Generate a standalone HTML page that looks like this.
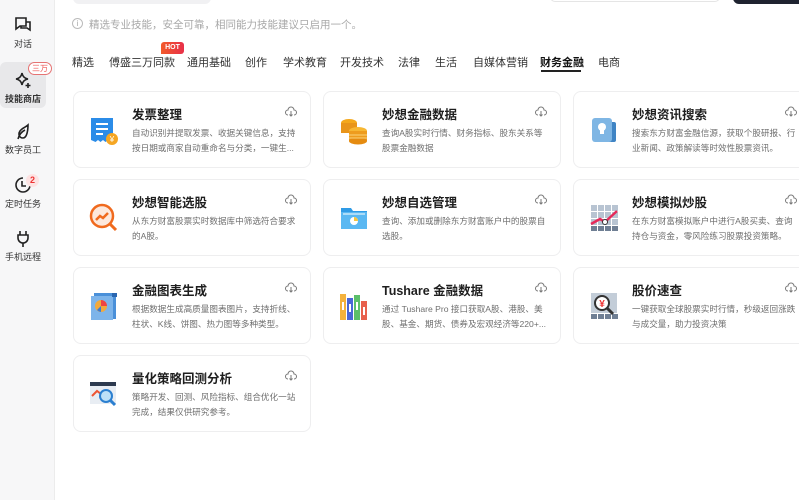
<!DOCTYPE html>
<html><head><meta charset="utf-8"><style>
*{margin:0;padding:0;box-sizing:border-box}
body{width:799px;height:500px;overflow:hidden;background:#fff;font-family:"Liberation Sans","Noto Sans CJK SC",sans-serif;position:relative;color:#222}
.sb{position:absolute;left:0;top:0;width:55px;height:500px;background:#f7f7f8;border-right:1px solid #ececec}
.si{position:absolute;left:0;width:46px;text-align:center;font-size:9px;color:#333}
.si svg{display:block;margin:0 auto 3px}
.act{background:#e8e8ea;border-radius:6px;font-weight:bold}
.a{position:absolute}
.tab{position:absolute;top:54px;font-size:11px;color:#333;white-space:nowrap}
.card{position:absolute;width:238px;height:77px;border:1px solid #eeeeef;border-radius:8px;background:#fff}
.card .ic{position:absolute;left:14px;top:22px;width:32px;height:32px}
.card h3{position:absolute;left:58px;top:12px;font-size:12.5px;font-weight:bold;color:#1e1e1e;white-space:nowrap}
.card p{position:absolute;left:58px;top:34px;width:168px;font-size:8.6px;line-height:15px;color:#6f6f6f;height:30px;overflow:hidden}
.card .dl{position:absolute;right:13px;top:14px}
</style></head><body>
<div class="a" style="left:73px;top:-8px;width:138px;height:12px;background:#f1f1f3;border-radius:6px"></div>
<div class="a" style="left:550px;top:-8px;width:170px;height:10px;border:1px solid #e5e5e5;border-radius:6px"></div>
<div class="a" style="left:733px;top:-8px;width:80px;height:12px;background:#1f2330;border-radius:6px"></div>

<div class="sb">
<div class="si" style="top:16px"><svg width="18" height="18" viewBox="0 0 18 18" fill="none" stroke="#222" stroke-width="1.6"><path d="M2 2h10v8H6l-4 3z"/><path d="M12 6h4v8l-3-2H7v-2"/></svg>对话</div>
<div class="si act" style="top:62px;height:46px;padding-top:9px"><svg width="18" height="18" viewBox="0 0 18 18" fill="none" stroke="#222" stroke-width="1.6"><path d="M8 2c.6 3.6 2.4 5.4 6 6-3.6.6-5.4 2.4-6 6-.6-3.6-2.4-5.4-6-6 3.6-.6 5.4-2.4 6-6z"/><path d="M14 12v5M11.5 14.5h5"/></svg>技能商店</div>
<div class="a" style="left:28px;top:62px;width:24px;height:13px;border:1px solid #e57373;border-radius:7px;background:#fff;color:#e55;font-size:8px;text-align:center;line-height:11px">三万</div>
<div class="si" style="top:122px"><svg width="18" height="18" viewBox="0 0 18 18" fill="none" stroke="#222" stroke-width="1.6"><path d="M9 16c-4 0-5-4-3-7s6-4 8-6c0 5-1 13-5 13zM4 17c1-4 3-7 7-9"/></svg>数字员工</div>
<div class="si" style="top:176px"><svg width="18" height="18" viewBox="0 0 18 18" fill="none" stroke="#222" stroke-width="1.6"><path d="M9 2a7 7 0 1 0 7 7"/><path d="M8 5v5h4"/></svg>定时任务</div>
<div class="a" style="left:26px;top:174px;width:13px;height:13px;border-radius:7px;background:#fde3e3;color:#e33;font-size:9px;font-weight:bold;text-align:center;line-height:13px">2</div>
<div class="si" style="top:229px"><svg width="18" height="18" viewBox="0 0 18 18" fill="none" stroke="#222" stroke-width="1.6"><path d="M6 2v4M12 2v4M4 6h10v3a5 5 0 0 1-10 0zM9 14v4"/></svg>手机远程</div>
</div>

<div class="a" style="left:72px;top:18px;width:11px;height:11px;border:1px solid #bbb;border-radius:50%;font-size:8px;color:#aaa;text-align:center;line-height:9px">i</div>
<div class="a" style="left:89px;top:17px;font-size:10.5px;color:#a8a8a8">精选专业技能，安全可靠，相同能力技能建议只启用一个。</div>

<div class="a" style="left:161px;top:42px;width:23px;height:12px;background:linear-gradient(90deg,#f25a2a,#e8304a);border-radius:3px 3px 3px 0;color:#fff;font-size:7px;font-weight:bold;text-align:center;line-height:12px">HOT</div>
<div class="tab" style="left:72px">精选</div>
<div class="tab" style="left:109px">傅盛三万同款</div>
<div class="tab" style="left:187px">通用基础</div>
<div class="tab" style="left:245px">创作</div>
<div class="tab" style="left:283px">学术教育</div>
<div class="tab" style="left:340px">开发技术</div>
<div class="tab" style="left:398px">法律</div>
<div class="tab" style="left:435px">生活</div>
<div class="tab" style="left:473px">自媒体营销</div>
<div class="tab" style="left:540px;font-weight:bold;color:#111">财务金融</div>
<div class="a" style="left:541px;top:70px;width:40px;height:2px;background:#222"></div>
<div class="tab" style="left:598px">电商</div>

<!-- cards -->
<div class="card" style="left:73px;top:91px"><svg class="ic" viewBox="0 0 32 32"><path d="M3 4h22v22l-2.5 2-2.5-2-2.5 2-2.5-2-2.5 2-2.5-2-2.5 2L3 26z" fill="#2b8ce8"/><path d="M8 10h12M8 15h12M8 20h7" stroke="#fff" stroke-width="2"/><circle cx="24" cy="25" r="6" fill="#f5a623"/><text x="24" y="28" font-size="8" fill="#fff" text-anchor="middle">¥</text></svg><h3>发票整理</h3><p>自动识别并提取发票、收据关键信息，支持按日期或商家自动重命名与分类，一键生...</p><svg class="dl" width="12" height="12" viewBox="0 0 12 12" fill="none" stroke="#777" stroke-width="1"><path d="M3 9a2.5 2.5 0 0 1 0-5 3 3 0 0 1 6 0 2.5 2.5 0 0 1 0 5M6 5v5M4.5 8.5 6 10l1.5-1.5"/></svg></div>

<div class="card" style="left:323px;top:91px"><svg class="ic" viewBox="0 0 32 32"><ellipse cx="11" cy="9" rx="8" ry="4" fill="#f4a81c"/><rect x="3" y="9" width="16" height="10" fill="#e9951a"/><ellipse cx="20" cy="17" rx="9" ry="4" fill="#f7b733"/><rect x="11" y="17" width="18" height="10" fill="#ee9c1e"/><ellipse cx="20" cy="27" rx="9" ry="3.5" fill="#e58b10"/><path d="M11 21h18M11 24h18" stroke="#fcd37a"/></svg><h3>妙想金融数据</h3><p>查询A股实时行情、财务指标、股东关系等股票金融数据</p><svg class="dl" width="12" height="12" viewBox="0 0 12 12" fill="none" stroke="#777" stroke-width="1"><path d="M3 9a2.5 2.5 0 0 1 0-5 3 3 0 0 1 6 0 2.5 2.5 0 0 1 0 5M6 5v5M4.5 8.5 6 10l1.5-1.5"/></svg></div>

<div class="card" style="left:573px;top:91px"><svg class="ic" viewBox="0 0 32 32"><rect x="16" y="8" width="12" height="20" rx="2" fill="#3f84c4"/><rect x="4" y="4" width="20" height="24" rx="3" fill="#7fb6e4"/><circle cx="14" cy="13" r="4" fill="#fff"/><rect x="12" y="16" width="4" height="4" fill="#fff"/></svg><h3>妙想资讯搜索</h3><p>搜索东方财富金融信源，获取个股研报、行业新闻、政策解读等时效性股票资讯。</p><svg class="dl" width="12" height="12" viewBox="0 0 12 12" fill="none" stroke="#777" stroke-width="1"><path d="M3 9a2.5 2.5 0 0 1 0-5 3 3 0 0 1 6 0 2.5 2.5 0 0 1 0 5M6 5v5M4.5 8.5 6 10l1.5-1.5"/></svg></div>

<div class="card" style="left:73px;top:179px"><svg class="ic" viewBox="0 0 32 32"><circle cx="14" cy="14" r="11" fill="#fde8dc" stroke="#f06a1e" stroke-width="2.5"/><path d="M8 18l4-4 3 2 5-5" stroke="#f06a1e" stroke-width="2.5" fill="none"/><path d="M22 22l6 6" stroke="#f06a1e" stroke-width="3"/></svg><h3>妙想智能选股</h3><p>从东方财富股票实时数据库中筛选符合要求的A股。</p><svg class="dl" width="12" height="12" viewBox="0 0 12 12" fill="none" stroke="#777" stroke-width="1"><path d="M3 9a2.5 2.5 0 0 1 0-5 3 3 0 0 1 6 0 2.5 2.5 0 0 1 0 5M6 5v5M4.5 8.5 6 10l1.5-1.5"/></svg></div>

<div class="card" style="left:323px;top:179px"><svg class="ic" viewBox="0 0 32 32"><path d="M3 6h10l2 3h14v18H3z" fill="#2f9be6"/><rect x="3" y="10" width="26" height="17" fill="#5ab8f2"/><path d="M5 12h22" stroke="#fff"/><circle cx="16" cy="19" r="4" fill="#fff"/><path d="M16 15v4h4a4 4 0 0 0-4-4z" fill="#f5c542"/></svg><h3>妙想自选管理</h3><p>查询、添加或删除东方财富账户中的股票自选股。</p><svg class="dl" width="12" height="12" viewBox="0 0 12 12" fill="none" stroke="#777" stroke-width="1"><path d="M3 9a2.5 2.5 0 0 1 0-5 3 3 0 0 1 6 0 2.5 2.5 0 0 1 0 5M6 5v5M4.5 8.5 6 10l1.5-1.5"/></svg></div>

<div class="card" style="left:573px;top:179px"><svg class="ic" viewBox="0 0 32 32"><g fill="#b8c4d2"><rect x="3" y="3" width="6" height="6"/><rect x="10" y="3" width="6" height="6"/><rect x="17" y="3" width="6" height="6"/><rect x="24" y="3" width="6" height="6"/><rect x="3" y="10" width="6" height="6"/><rect x="10" y="10" width="6" height="6"/><rect x="17" y="10" width="6" height="6"/><rect x="24" y="10" width="6" height="6"/><rect x="3" y="17" width="6" height="6"/><rect x="10" y="17" width="6" height="6"/><rect x="17" y="17" width="6" height="6"/><rect x="24" y="17" width="6" height="6"/></g><g fill="#6f7f94"><rect x="3" y="24" width="6" height="5"/><rect x="10" y="24" width="6" height="5"/><rect x="17" y="24" width="6" height="5"/><rect x="24" y="24" width="6" height="5"/></g><path d="M3 22l9-5 5 3 12-11" stroke="#e52a5a" stroke-width="2.5" fill="none"/><circle cx="17" cy="20" r="2.5" fill="#fff" stroke="#333"/></svg><h3>妙想模拟炒股</h3><p>在东方财富模拟账户中进行A股买卖、查询持仓与资金，零风险练习股票投资策略。</p><svg class="dl" width="12" height="12" viewBox="0 0 12 12" fill="none" stroke="#777" stroke-width="1"><path d="M3 9a2.5 2.5 0 0 1 0-5 3 3 0 0 1 6 0 2.5 2.5 0 0 1 0 5M6 5v5M4.5 8.5 6 10l1.5-1.5"/></svg></div>

<div class="card" style="left:73px;top:267px"><svg class="ic" viewBox="0 0 32 32"><rect x="6" y="3" width="22" height="26" fill="#4a90d9"/><rect x="3" y="6" width="22" height="24" fill="#7db4ea"/><circle cx="13" cy="16" r="6" fill="#f2a93b"/><path d="M13 10v6h6a6 6 0 0 0-6-6z" fill="#e44"/><path d="M13 16l-4 4a6 6 0 0 0 4 2z" fill="#3a7bd5"/><rect x="24" y="3" width="5" height="4" fill="#2a66b0"/></svg><h3>金融图表生成</h3><p>根据数据生成高质量图表图片，支持折线、柱状、K线、饼图、热力图等多种类型。</p><svg class="dl" width="12" height="12" viewBox="0 0 12 12" fill="none" stroke="#777" stroke-width="1"><path d="M3 9a2.5 2.5 0 0 1 0-5 3 3 0 0 1 6 0 2.5 2.5 0 0 1 0 5M6 5v5M4.5 8.5 6 10l1.5-1.5"/></svg></div>

<div class="card" style="left:323px;top:267px"><svg class="ic" viewBox="0 0 32 32"><rect x="2" y="4" width="6" height="26" fill="#f4b23d"/><rect x="9" y="8" width="6" height="22" fill="#4a67d6"/><rect x="16" y="5" width="6" height="25" fill="#5cbf6a"/><rect x="23" y="11" width="6" height="19" fill="#e8604c"/><g fill="#fff"><rect x="4" y="12" width="2" height="8"/><rect x="11" y="14" width="2" height="8"/><rect x="18" y="12" width="2" height="8"/><rect x="25" y="17" width="2" height="8"/></g></svg><h3>Tushare 金融数据</h3><p>通过 Tushare Pro 接口获取A股、港股、美股、基金、期货、债券及宏观经济等220+...</p><svg class="dl" width="12" height="12" viewBox="0 0 12 12" fill="none" stroke="#777" stroke-width="1"><path d="M3 9a2.5 2.5 0 0 1 0-5 3 3 0 0 1 6 0 2.5 2.5 0 0 1 0 5M6 5v5M4.5 8.5 6 10l1.5-1.5"/></svg></div>

<div class="card" style="left:573px;top:267px"><svg class="ic" viewBox="0 0 32 32"><g fill="#c3cdd8"><rect x="3" y="3" width="26" height="20"/></g><g fill="#6f7f94"><rect x="3" y="24" width="6" height="5"/><rect x="10" y="24" width="6" height="5"/><rect x="17" y="24" width="6" height="5"/><rect x="24" y="24" width="6" height="5"/></g><circle cx="14" cy="13" r="7" fill="#fff" stroke="#333" stroke-width="2"/><text x="14" y="17" font-size="10" fill="#e33" text-anchor="middle" font-weight="bold">¥</text><path d="M19 18l6 6" stroke="#333" stroke-width="3"/></svg><h3>股价速查</h3><p>一键获取全球股票实时行情，秒级返回涨跌与成交量，助力投资决策</p><svg class="dl" width="12" height="12" viewBox="0 0 12 12" fill="none" stroke="#777" stroke-width="1"><path d="M3 9a2.5 2.5 0 0 1 0-5 3 3 0 0 1 6 0 2.5 2.5 0 0 1 0 5M6 5v5M4.5 8.5 6 10l1.5-1.5"/></svg></div>

<div class="card" style="left:73px;top:355px"><svg class="ic" viewBox="0 0 32 32"><rect x="2" y="4" width="26" height="4" fill="#2d3a4f"/><rect x="2" y="8" width="26" height="18" fill="#e8edf3"/><path d="M4 18l5-5 4 3" stroke="#e53" stroke-width="2" fill="none"/><circle cx="18" cy="18" r="6" fill="#bde0f7" stroke="#2b7fd0" stroke-width="2"/><path d="M22 22l5 5" stroke="#2b7fd0" stroke-width="3"/></svg><h3>量化策略回测分析</h3><p>策略开发、回测、风险指标、组合优化一站完成，结果仅供研究参考。</p><svg class="dl" width="12" height="12" viewBox="0 0 12 12" fill="none" stroke="#777" stroke-width="1"><path d="M3 9a2.5 2.5 0 0 1 0-5 3 3 0 0 1 6 0 2.5 2.5 0 0 1 0 5M6 5v5M4.5 8.5 6 10l1.5-1.5"/></svg></div>
</body></html>
